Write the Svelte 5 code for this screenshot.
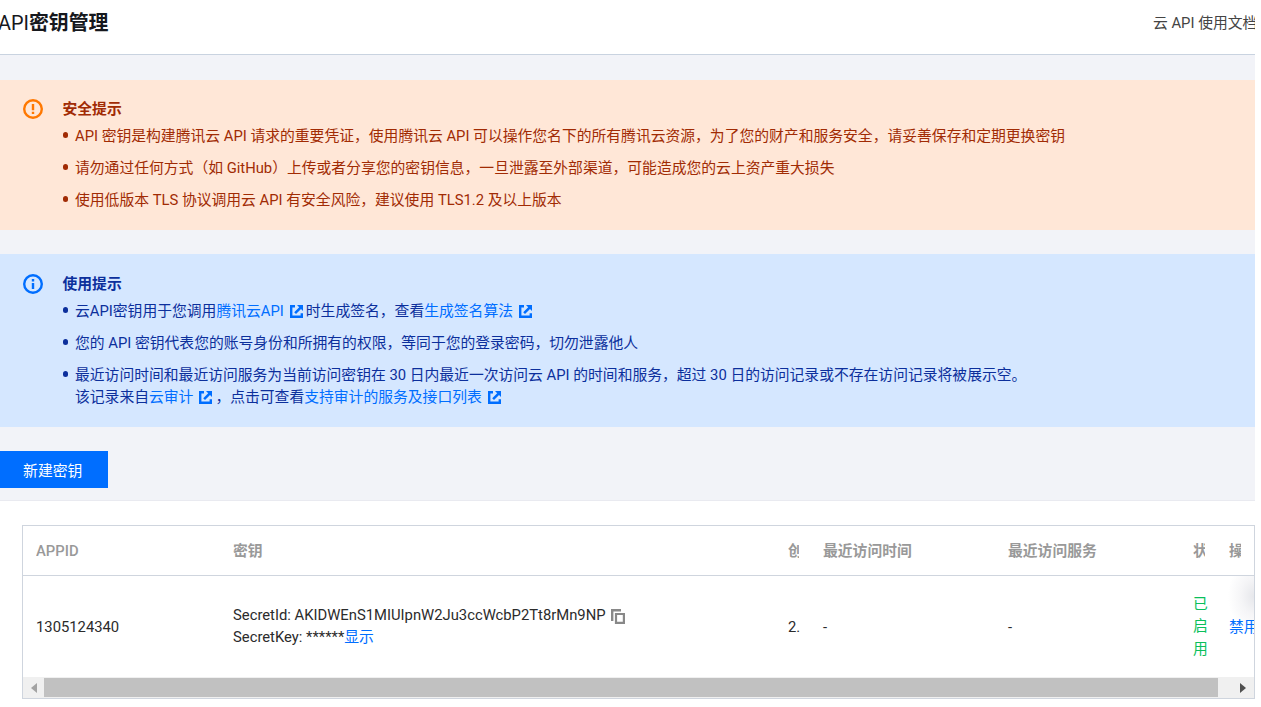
<script lang="ts">
  interface Column {
    key:    string;
    title:  string;
    latin?: boolean;
  }

  const columns: Column[] = [
    { key: "appid",   title: "APPID", latin: true },
    { key: "secret",  title: "密钥" },
    { key: "created", title: "创建" },
    { key: "time",    title: "最近访问时间" },
    { key: "service", title: "最近访问服务" },
    { key: "status",  title: "状态" },
    { key: "action",  title: "操作" },
  ];

  const warnings = [
    "API 密钥是构建腾讯云 API 请求的重要凭证，使用腾讯云 API 可以操作您名下的所有腾讯云资源，为了您的财产和服务安全，请妥善保存和定期更换密钥",
    "请勿通过任何方式（如 GitHub）上传或者分享您的密钥信息，一旦泄露至外部渠道，可能造成您的云上资产重大损失",
    "使用低版本 TLS 协议调用云 API 有安全风险，建议使用 TLS1.2 及以上版本",
  ];

  let row = $state({
    appid: "1305124340",
    secretId: "AKIDWEnS1MIUIpnW2Ju3ccWcbP2Tt8rMn9NP",
    created: "2.",
    time: "-",
    service: "-",
    status: "已启用",
  });
</script>

{#snippet external()}
  <svg class="ext" viewBox="0 0 13 13" aria-hidden="true">
    <path d="M5 0H0v13h13V8.2h-2.4v2.4H2.4V2.4H5zM7 0h6v6l-2-2-5 5-1.8-1.8 5-5z" fill="currentColor" />
  </svg>
{/snippet}

<div class="page">
  <header class="top">
    <h1><span>API</span>密钥管理</h1>
    <a class="doc" href="#doc">云 API 使用文档</a>
  </header>

  <main>
    <section class="alert warn">
      <svg class="mark" viewBox="0 0 20 20" aria-hidden="true">
        <circle cx="10" cy="10" r="8.8" fill="none" stroke="currentColor" stroke-width="2.4" />
        <path d="M8.8 5h2.4v6.2H8.8zM8.8 12.7h2.4v2.4H8.8z" fill="currentColor" />
      </svg>
      <div>
        <h2>安全提示</h2>
        <ul>
          {#each warnings as text}
            <li>{text}</li>
          {/each}
        </ul>
      </div>
    </section>

    <section class="alert info">
      <svg class="mark" viewBox="0 0 20 20" aria-hidden="true">
        <circle cx="10" cy="10" r="8.8" fill="none" stroke="currentColor" stroke-width="2.4" />
        <path d="M8.8 5h2.4v2.4H8.8zM8.8 8.9h2.4v6.2H8.8z" fill="currentColor" />
      </svg>
      <div>
        <h2>使用提示</h2>
        <ul>
          <li>云API密钥用于您调用<a href="#api">腾讯云API{@render external()}</a>时生成签名，查看<a href="#sign">生成签名算法{@render external()}</a></li>
          <li>您的 API 密钥代表您的账号身份和所拥有的权限，等同于您的登录密码，切勿泄露他人</li>
          <li>最近访问时间和最近访问服务为当前访问密钥在 30 日内最近一次访问云 API 的时间和服务，超过 30 日的访问记录或不存在访问记录将被展示空。<br />该记录来自<a href="#audit">云审计{@render external()}</a>，点击可查看<a href="#list">支持审计的服务及接口列表{@render external()}</a></li>
        </ul>
      </div>
    </section>

    <button class="create">新建密钥</button>
  </main>

  <div class="panel">
    <div class="table">
      <div class="row head">
        {#each columns as col (col.key)}
          <div class="cell" class:latin={col.latin}><span class="clip">{col.title}</span></div>
        {/each}
      </div>

      <div class="row body">
        <div class="cell">{row.appid}</div>
        <div class="cell secret">
          SecretId: {row.secretId}
          <svg class="copy" viewBox="0 0 14 15" aria-hidden="true">
            <path d="M0 0h10v2.4H2.4V12H0z" fill="currentColor" />
            <path d="M5 5h7.9v8.8H5z" fill="none" stroke="currentColor" stroke-width="2.2" />
          </svg><br />
          SecretKey: ******<a href="#show">显示</a>
        </div>
        <div class="cell">{row.created}</div>
        <div class="cell">{row.time}</div>
        <div class="cell">{row.service}</div>
        <div class="cell status">{row.status}</div>
        <div class="cell action"><a href="#disable">禁用</a></div>
      </div>

      <div class="scroll">
        <svg viewBox="0 0 6 10" class="off" aria-hidden="true"><path d="M6 0v10L0 5z" fill="currentColor" /></svg>
        <div class="thumb"></div>
        <svg viewBox="0 0 6 10" aria-hidden="true"><path d="M0 0v10l6-5z" fill="currentColor" /></svg>
      </div>
    </div>
  </div>
</div>

<style>
:global(body) {
  background: #fff;
  overflow: hidden;
}

.page {
  width: 1255px;
  height: 707px;
  overflow: hidden;
  color: #2b2b2b;
  font: 14.8px/22.2px Roboto, "Noto Sans CJK SC", sans-serif;
}

a {
  color: #006eff;
  text-decoration: none;
}

.top {
  box-sizing: border-box;
  display: flex;
  justify-content: space-between;
  height: 55px;
  padding: 8px 0 0;
  border-bottom: 1px solid #c9d3e0;
}
h1 {
  margin: 1px 0 0 -2px;
  color: #16181d;
  font-size: 19.9px;
  line-height: 30px;
  font-weight: 700;
}
h1 span { font-weight: 400; }
.doc {
  width: 102px;
  overflow: hidden;
  padding-top: 4px;
  color: #444;
  white-space: nowrap;
}

main {
  box-sizing: border-box;
  height: 446px;
  padding-top: 25px;
  border-bottom: 1px solid #e9eaf0;
  background: #f2f3f8;
}

.alert {
  box-sizing: border-box;
  display: flex;
  gap: 19.5px;
  padding: 18px 23px 0;
}
.warn {
  height: 150px;
  background: #ffe7d7;
  color: #a12b04;
}
.info {
  height: 173px;
  margin-top: 24px;
  padding-top: 19px;
  background: #d5e7ff;
  color: #0c2f9c;
}
.mark {
  flex: none;
  width: 20px;
  height: 20px;
  margin-top: 1px;
}
.warn .mark { color: #ff7800; }
.info .mark { color: #006eff; }
h2 {
  margin: 0;
  font-size: 14.8px;
  line-height: 22px;
  font-weight: 700;
}
ul {
  margin: 5px 0 0;
  padding: 0;
  list-style: none;
}
li {
  position: relative;
  margin-bottom: 9.8px;
  padding-left: 12.5px;
  white-space: nowrap;
}
li::before {
  content: "";
  position: absolute;
  top: 7px;
  left: 0;
  width: 5.5px;
  height: 5.5px;
  border-radius: 50%;
  background: currentColor;
}
.ext {
  width: 13px;
  height: 13px;
  margin: 0 3px 0 6px;
  vertical-align: -2px;
}

.create {
  display: block;
  width: 108.4px;
  height: 37.4px;
  margin-top: 24px;
  padding: 3px 3px 0 0;
  border: 0;
  background: #006eff;
  color: #fff;
  font: inherit;
}

.panel { padding: 24px 0 0 22px; }
.table {
  box-sizing: border-box;
  height: 174px;
  border: 1px solid #cfd5de;
  overflow: hidden;
}
.row {
  display: grid;
  grid-template-columns: 197px 555px 35px 185px 185px 36px 38px;
  align-items: center;
}
.head {
  box-sizing: border-box;
  height: 50px;
  padding-top: 1px;
  border-bottom: 1px solid #cfd5de;
  color: #999;
  font-weight: 700;
}
.latin { font-weight: 500; }
.body { height: 101px; }
.cell {
  min-width: 0;
  padding: 1px 11px 0 13px;
}
.cell:last-child { padding-right: 13px; }
.clip {
  display: block;
  overflow: hidden;
  white-space: nowrap;
}
.secret {
  padding: 0 0 2px 13px;
  line-height: 22px;
}
.status {
  width: 15px;
  padding-top: 0;
  color: #0abf5b;
}
.action {
  display: flex;
  align-items: center;
  align-self: stretch;
  white-space: nowrap;
  background: radial-gradient(ellipse 26px 36px at 100% 20%, #e6e7eb, #f5f5f7 50%, transparent);
}
.copy {
  width: 14px;
  height: 15px;
  margin: -4px 0 0 2px;
  color: #888;
  vertical-align: -4px;
}

.scroll {
  display: flex;
  align-items: center;
  height: 21px;
  background: #f0f0f0;
  color: #505050;
}
.scroll svg {
  width: 6px;
  height: 10px;
  margin-left: 22px;
}
.scroll .off {
  margin: 0 7px 0 8px;
  color: #a3a3a3;
}
.thumb {
  width: 1174px;
  height: 19px;
  background: #c1c1c1;
}
</style>
